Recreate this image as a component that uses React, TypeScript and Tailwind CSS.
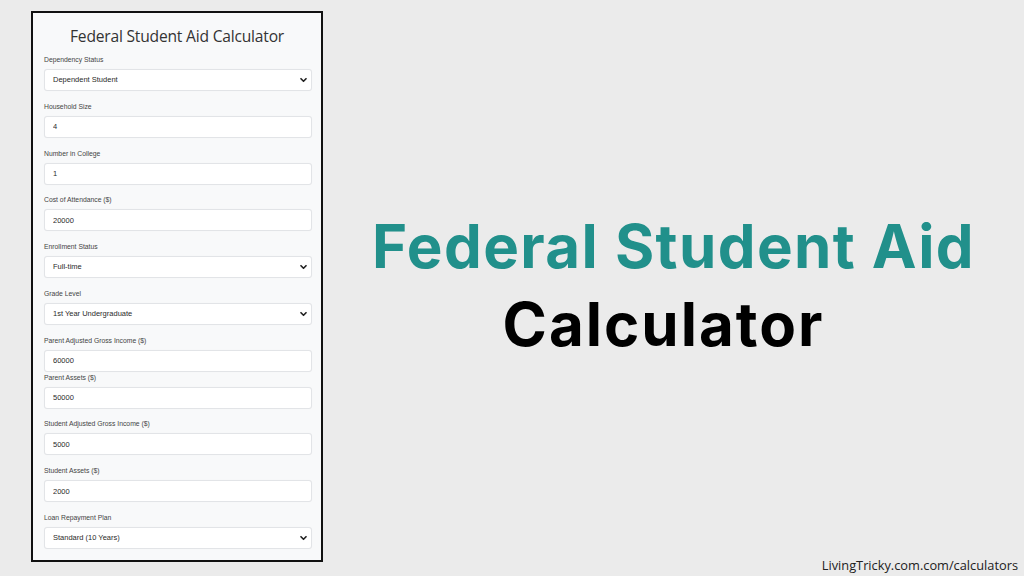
import React from 'react';

type Field = {
  label: string;
  value: string;
  select?: boolean;
  tight?: boolean;
};

const fields: Field[] = [
  { label: 'Dependency Status', value: 'Dependent Student', select: true },
  { label: 'Household Size', value: '4' },
  { label: 'Number in College', value: '1' },
  { label: 'Cost of Attendance ($)', value: '20000' },
  { label: 'Enrollment Status', value: 'Full-time', select: true },
  { label: 'Grade Level', value: '1st Year Undergraduate', select: true },
  { label: 'Parent Adjusted Gross Income ($)', value: '60000', tight: true },
  { label: 'Parent Assets ($)', value: '50000' },
  { label: 'Student Adjusted Gross Income ($)', value: '5000' },
  { label: 'Student Assets ($)', value: '2000' },
  { label: 'Loan Repayment Plan', value: 'Standard (10 Years)', select: true },
];

function Chevron() {
  return (
    <svg
      viewBox="0 0 8 6"
      className="pointer-events-none absolute right-[5px] top-1/2 h-[5px] w-[7px] -translate-y-1/2"
    >
      <path d="M1 1.5 L4 4.5 L7 1.5" fill="none" stroke="#222" strokeWidth="2" strokeLinecap="round" strokeLinejoin="round" />
    </svg>
  );
}

function FormField({ field }: { field: Field }) {
  const control =
    'block h-[22px] w-[268px] rounded-[3px] border border-[#e2e4e7] bg-white px-[8px] text-[7.5px] leading-[20px] text-[#2a2a2a] outline-none shadow-[0_0_1px_rgba(0,0,0,0.06)]';
  return (
    <div className={field.tight ? 'mb-[1px]' : 'mb-[10.75px]'}>
      <label className="mb-[4px] block h-[10px] text-[6.8px] leading-[10px] text-[#444]">{field.label}</label>
      <div className="relative h-[22px] w-[268px]">
        {field.select ? (
          <>
            <select className={`${control} appearance-none`} defaultValue={field.value}>
              <option>{field.value}</option>
            </select>
            <Chevron />
          </>
        ) : (
          <input className={control} readOnly value={field.value} />
        )}
      </div>
    </div>
  );
}

export default function App() {
  return (
    <div className="flex h-[576px] w-[1024px] overflow-hidden bg-[#ebebeb] font-['Liberation_Sans',Arial,sans-serif]">
      {/* Calculator card */}
      <div className="ml-[31px] mt-[11px] h-[551px] w-[292px] shrink-0 border-2 border-[#111] bg-[#f8f9fa] pl-[11px] pt-[12px]">
        <h2 className="mb-[8px] h-[22px] pr-[11px] text-center font-['Open_Sans',sans-serif] text-[15.6px] font-medium leading-[22px] tracking-[-0.2px] text-[#333]">
          Federal Student Aid Calculator
        </h2>
        {fields.map((f) => (
          <FormField key={f.label} field={f} />
        ))}
      </div>

      {/* Headline */}
      <div className="flex flex-1 flex-col">
        <div className="flex flex-1 flex-col items-center justify-center pt-[14px] font-['Inter',sans-serif] font-bold">
          <div className="text-[60px] leading-[78px] tracking-[1.4px] text-[#21908b]">Federal Student Aid</div>
          <div className="pr-[20px] text-[60px] leading-[78px] tracking-[2px] text-black">Calculator</div>
        </div>
        <div className="pb-[2px] pr-[6px] text-right font-['Open_Sans',sans-serif] text-[12.8px] leading-[18px] text-[#222]">
          LivingTricky.com.com/calculators
        </div>
      </div>
    </div>
  );
}
